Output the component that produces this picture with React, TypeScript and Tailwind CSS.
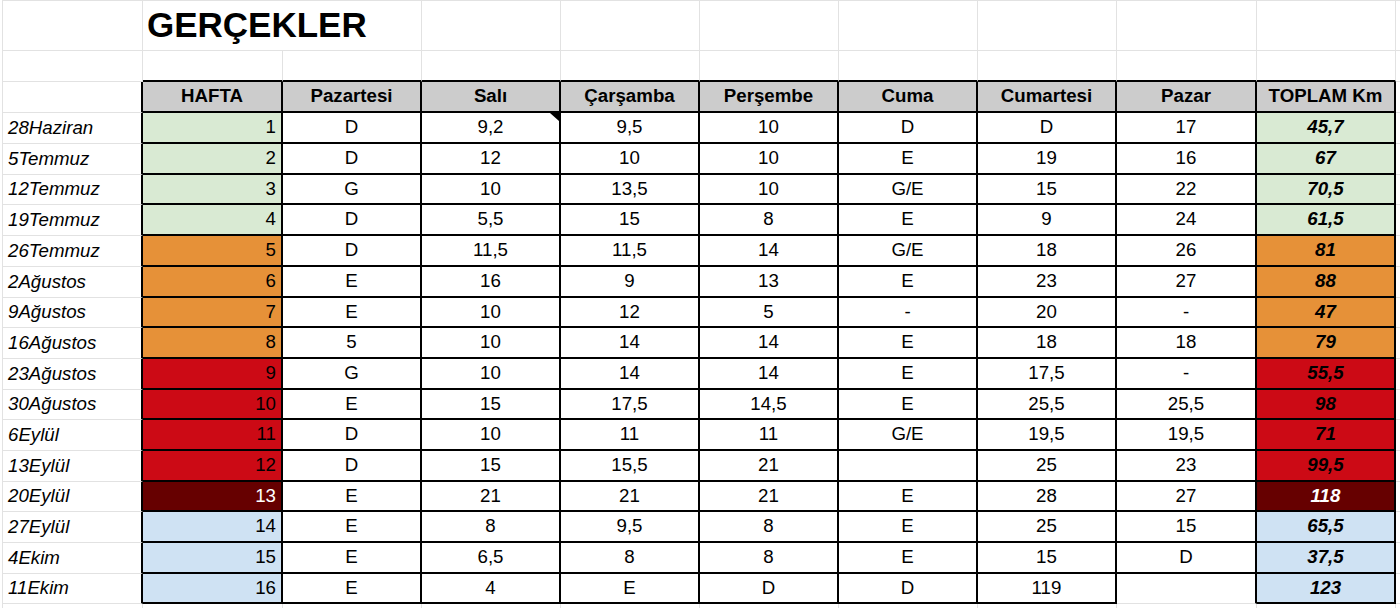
import React from "react";

type Row = { date: string; week: number; days: string[]; total: string; tone: "green" | "orange" | "red" | "dark" | "blue" };

const ROWS: Row[] = [
  { date: "28Haziran", week: 1, days: ["D", "9,2", "9,5", "10", "D", "D", "17"], total: "45,7", tone: "green" },
  { date: "5Temmuz", week: 2, days: ["D", "12", "10", "10", "E", "19", "16"], total: "67", tone: "green" },
  { date: "12Temmuz", week: 3, days: ["G", "10", "13,5", "10", "G/E", "15", "22"], total: "70,5", tone: "green" },
  { date: "19Temmuz", week: 4, days: ["D", "5,5", "15", "8", "E", "9", "24"], total: "61,5", tone: "green" },
  { date: "26Temmuz", week: 5, days: ["D", "11,5", "11,5", "14", "G/E", "18", "26"], total: "81", tone: "orange" },
  { date: "2Ağustos", week: 6, days: ["E", "16", "9", "13", "E", "23", "27"], total: "88", tone: "orange" },
  { date: "9Ağustos", week: 7, days: ["E", "10", "12", "5", "-", "20", "-"], total: "47", tone: "orange" },
  { date: "16Ağustos", week: 8, days: ["5", "10", "14", "14", "E", "18", "18"], total: "79", tone: "orange" },
  { date: "23Ağustos", week: 9, days: ["G", "10", "14", "14", "E", "17,5", "-"], total: "55,5", tone: "red" },
  { date: "30Ağustos", week: 10, days: ["E", "15", "17,5", "14,5", "E", "25,5", "25,5"], total: "98", tone: "red" },
  { date: "6Eylül", week: 11, days: ["D", "10", "11", "11", "G/E", "19,5", "19,5"], total: "71", tone: "red" },
  { date: "13Eylül", week: 12, days: ["D", "15", "15,5", "21", "", "25", "23"], total: "99,5", tone: "red" },
  { date: "20Eylül", week: 13, days: ["E", "21", "21", "21", "E", "28", "27"], total: "118", tone: "dark" },
  { date: "27Eylül", week: 14, days: ["E", "8", "9,5", "8", "E", "25", "15"], total: "65,5", tone: "blue" },
  { date: "4Ekim", week: 15, days: ["E", "6,5", "8", "8", "E", "15", "D"], total: "37,5", tone: "blue" },
  { date: "11Ekim", week: 16, days: ["E", "4", "E", "D", "D", "119", ""], total: "123", tone: "blue" },
];

const HEIGHTS = [
  "h-[31px]", "h-[31px]", "h-[30px]", "h-[31px]", "h-[31px]", "h-[31px]", "h-[30px]", "h-[31px]",
  "h-[31px]", "h-[30px]", "h-[31px]", "h-[31px]", "h-[30px]", "h-[31px]", "h-[31px]", "h-[30px]",
];

const TONE: Record<Row["tone"], string> = {
  green: "bg-[#d9ead3] text-black",
  orange: "bg-[#e69138] text-black",
  red: "bg-[#cc0a15] text-black",
  dark: "bg-[#660000] text-white",
  blue: "bg-[#cfe2f3] text-black",
};

// widths of columns B..J
const DAYW = ["w-[140px]", "w-[139px]", "w-[139px]", "w-[139px]", "w-[139px]", "w-[139px]", "w-[139px]", "w-[140px]", "w-[139px]"];
const HEAD = ["HAFTA", "Pazartesi", "Salı", "Çarşamba", "Perşembe", "Cuma", "Cumartesi", "Pazar", "TOPLAM Km"];

const GR = "border-r border-r-[#e2e2e2]";
const GB = "border-b border-b-[#e2e2e2]";
const BR = "border-r-2 border-r-black";
const BB = "border-b-2 border-b-black";
const COLA = "w-[141px] shrink-0 border-l border-l-[#e2e2e2]";

export default function App() {
  return (
    <div className="w-[1400px] h-[608px] overflow-hidden bg-white pl-[2px] font-['Liberation_Sans',Arial,sans-serif] text-[18.7px] text-black">
      {/* Title row */}
      <div className="flex h-[51px] border-t border-t-[#e2e2e2]">
        <div className={`${COLA} ${GR} ${GB}`} />
        <div className={`w-[279px] shrink-0 ${GR} ${GB} flex items-center pl-[4px]`}>
          <span className="text-[35px] font-bold leading-normal">GERÇEKLER</span>
        </div>
        {DAYW.slice(2).map((w, i) => (
          <div key={i} className={`${w} shrink-0 ${GR} ${GB}`} />
        ))}
        <div className={`flex-1 ${GB}`} />
      </div>
      {/* Empty row */}
      <div className="flex h-[31px]">
        <div className={`${COLA} ${GR} ${GB}`} />
        {DAYW.map((w, i) => (
          <div key={i} className={`${w} shrink-0 ${GR} ${BB}`} />
        ))}
        <div className={`flex-1 ${GB}`} />
      </div>
      {/* Header row */}
      <div className="flex h-[31px]">
        <div className={`${COLA} ${BR} ${GB}`} />
        {DAYW.map((w, i) => (
          <div
            key={i}
            className={`${w} shrink-0 ${BR} ${BB} bg-[#cccccc] flex items-center justify-center font-bold`}
          >
            {HEAD[i]}
          </div>
        ))}
        <div className={`flex-1 ${GB}`} />
      </div>
      {/* Data rows */}
      {ROWS.map((r, ri) => {
        const last = ri === ROWS.length - 1;
        return (
          <div key={ri} className={`flex ${HEIGHTS[ri]}`}>
            <div className={`${COLA} ${BR} ${GB} flex items-center pl-[5px] italic`}>{r.date}</div>
            <div className={`${DAYW[0]} shrink-0 ${BR} ${BB} ${TONE[r.tone]} flex items-center justify-end pr-[5px]`}>
              {r.week}
            </div>
            {r.days.map((d, di) => (
              <div
                key={di}
                className={`${DAYW[di + 1]} shrink-0 ${BR} ${last && di === 6 ? GB : BB} relative flex items-center justify-center`}
              >
                {d}
                {ri === 0 && di === 1 && (
                  <svg className="absolute right-0 top-0" width="9" height="8" viewBox="0 0 9 8">
                    <polygon points="0,0 9,0 9,8" fill="#000" />
                  </svg>
                )}
              </div>
            ))}
            <div className={`${DAYW[8]} shrink-0 ${BR} ${BB} ${TONE[r.tone]} flex items-center justify-center font-bold italic`}>
              {r.total}
            </div>
            <div className={`flex-1 ${GB}`} />
          </div>
        );
      })}
      {/* Trailing partial row */}
      <div className="flex h-[10px]">
        <div className={`${COLA} ${GR}`} />
        {DAYW.map((w, i) => (
          <div key={i} className={`${w} shrink-0 ${GR}`} />
        ))}
        <div className="flex-1" />
      </div>
    </div>
  );
}
